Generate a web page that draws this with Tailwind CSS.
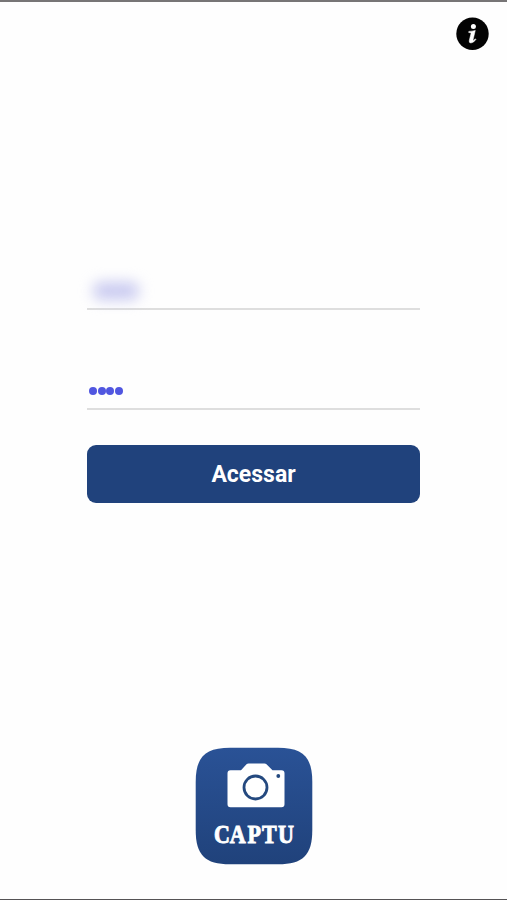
<!DOCTYPE html>
<html lang="pt-BR">
<head>
<meta charset="utf-8">
<meta name="viewport" content="width=device-width, initial-scale=1">
<title>Captu</title>
<script src="https://cdn.jsdelivr.net/npm/@tailwindcss/browser@4"></script>
</head>
<body class="bg-[#fefefe] font-[Roboto,sans-serif]">
<div class="flex h-[900px] w-[507px] flex-col overflow-hidden border-t-2 border-b border-t-[#777576] border-b-[#555355]">
  <header class="flex justify-end pt-[15px] pr-[18px]">
    <button aria-label="Info">
      <svg class="block size-[33px]" viewBox="0 0 33 33">
        <circle cx="16.5" cy="16.8" r="16.2" fill="#030303"/>
        <circle cx="17.400" cy="9.600" r="2.500" fill="#fff"/>
        <path d="M12.800 14.400Q16 14.200 19.300 13.400L17 23Q17 24.200 19.400 21.800L19.900 22.500Q17.500 26 14.900 26Q12.700 26 13.300 23.300L15 16.500Q15.200 15.500 12.700 15.500Z" fill="#fff" stroke="#fff" stroke-width=".5"/>
      </svg>
    </button>
  </header>
  <main class="mx-[87px] mt-[222px] flex flex-col">
    <div class="flex h-[38px] items-center border-b-2 border-[#dedede] pt-px pl-[6px]">
      <span class="h-[18px] w-[46px] rounded-lg bg-[#c9caf0] blur-[7px]"></span>
    </div>
    <div class="mt-[62px] flex h-[38px] items-center gap-[0.6px] border-b-2 border-[#dedede] pt-[2px] pl-[2px]">
      <span class="size-[8px] rounded-full bg-[#5056e0]"></span>
      <span class="size-[8px] rounded-full bg-[#5056e0]"></span>
      <span class="size-[8px] rounded-full bg-[#5056e0]"></span>
      <span class="size-[8px] rounded-full bg-[#5056e0]"></span>
    </div>
    <button class="mt-[35px] flex h-[57.5px] items-center justify-center rounded-[9px] bg-[#20427c] pt-[2px] text-[23px] font-bold text-white">Acessar</button>
  </main>
  <footer class="mt-[244.5px] flex justify-center">
    <svg class="block h-[118px] w-[118px]" viewBox="0 0 118 118">
      <defs>
        <linearGradient id="bg" x1="0" y1="0" x2="0" y2="1">
          <stop offset="0" stop-color="#2a5296"/>
          <stop offset="1" stop-color="#20427b"/>
        </linearGradient>
      </defs>
      <path d="M35 .7H83C108 .7 117.3 10 117.3 35V83C117.3 108 108 117.3 83 117.3H35C10 117.3 .7 108 .7 83V35C.7 10 10 .7 35 .7Z" fill="url(#bg)"/>
      <g transform="translate(0 .7)">
        <path d="M35.500 22.500H46L51.500 16.500Q52.300 15.700 53.500 15.700H69.500Q70.700 15.700 71.500 16.500L77.500 22.500H86.500Q89.500 22.500 89.500 25.500V56.500Q89.500 59.500 86.500 59.500H35.500Q32.500 59.500 32.500 56.500V25.500Q32.500 22.500 35.500 22.500Z" fill="#fff"/>
        <circle cx="60.500" cy="39.800" r="11.500" fill="none" stroke="#24497f" stroke-width="2.800"/>
        <circle cx="83.300" cy="28.300" r="1.900" fill="#24497f"/>
      </g>
      <text transform="translate(19 96.300) scale(.9 1)" x="0 17.400 37.100 53.300 71" y="0" font-family="Liberation Serif, serif" font-weight="700" font-size="24.500" fill="#fff" stroke="#fff" stroke-width=".9">CAPTU</text>
    </svg>
  </footer>
</div>
</body>
</html>
